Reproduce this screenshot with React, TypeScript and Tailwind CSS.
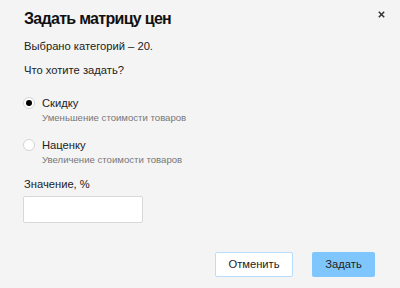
import React from "react";

export default function App() {
  return (
    <div
      className="w-[400px] h-[288px] bg-[#f4f4f4] relative overflow-hidden text-[#222]"
      style={{ fontFamily: '"Liberation Sans", Arial, sans-serif' }}
    >
      <button className="absolute left-[378px] top-[11px] w-[7px] h-[7px] flex items-center justify-center">
        <svg width="7" height="7" viewBox="0 0 7 7">
          <path d="M0.8 0.8L6.2 6.2M6.2 0.8L0.8 6.2" stroke="#333" strokeWidth="1.5" />
        </svg>
      </button>
      <div className="pl-[24px] pt-[9px] flex flex-col">
        <h1 className="text-[16px] font-bold leading-[19px] tracking-[-0.7px] text-[#111]">Задать матрицу цен</h1>
        <p className="text-[11.2px] leading-[13px] mt-[12px]">Выбрано категорий – 20.</p>
        <p className="text-[11.2px] leading-[13px] mt-[11px]">Что хотите задать?</p>
        <div className="mt-[20px] flex flex-col gap-[15px]">
          <label className="flex items-start">
            <span className="ml-[-1px] w-[12px] h-[12px] rounded-full bg-white border border-[#d4d4d4] flex items-center justify-center">
              <span className="w-[6px] h-[6px] rounded-full bg-black" />
            </span>
            <span className="ml-[7px] flex flex-col">
              <span className="text-[11.2px] leading-[13px]">Скидку</span>
              <span className="text-[9.6px] leading-[12px] text-[#777] mt-[2px]">Уменьшение стоимости товаров</span>
            </span>
          </label>
          <label className="flex items-start">
            <span className="ml-[-1px] w-[12px] h-[12px] rounded-full bg-white border border-[#d4d4d4]" />
            <span className="ml-[7px] flex flex-col">
              <span className="text-[11.2px] leading-[13px]">Наценку</span>
              <span className="text-[9.6px] leading-[12px] text-[#777] mt-[2px]">Увеличение стоимости товаров</span>
            </span>
          </label>
        </div>
        <p className="text-[11.2px] leading-[13px] mt-[12px]">Значение, %</p>
        <input
          className="mt-[5px] ml-[-1px] w-[120px] h-[27px] bg-white border border-[#d8d8d8] rounded-[2px] outline-none"
          type="text"
        />
      </div>
      <div className="absolute left-[215px] top-[252px] flex gap-[19px]">
        <button className="w-[78px] h-[25px] bg-white border border-[#b8ddff] rounded-[2px] text-[11.2px] text-[#222]">
          Отменить
        </button>
        <button className="w-[63px] h-[25px] bg-[#7fc6fd] rounded-[2px] text-[11.2px] text-[#222]">
          Задать
        </button>
      </div>
    </div>
  );
}
